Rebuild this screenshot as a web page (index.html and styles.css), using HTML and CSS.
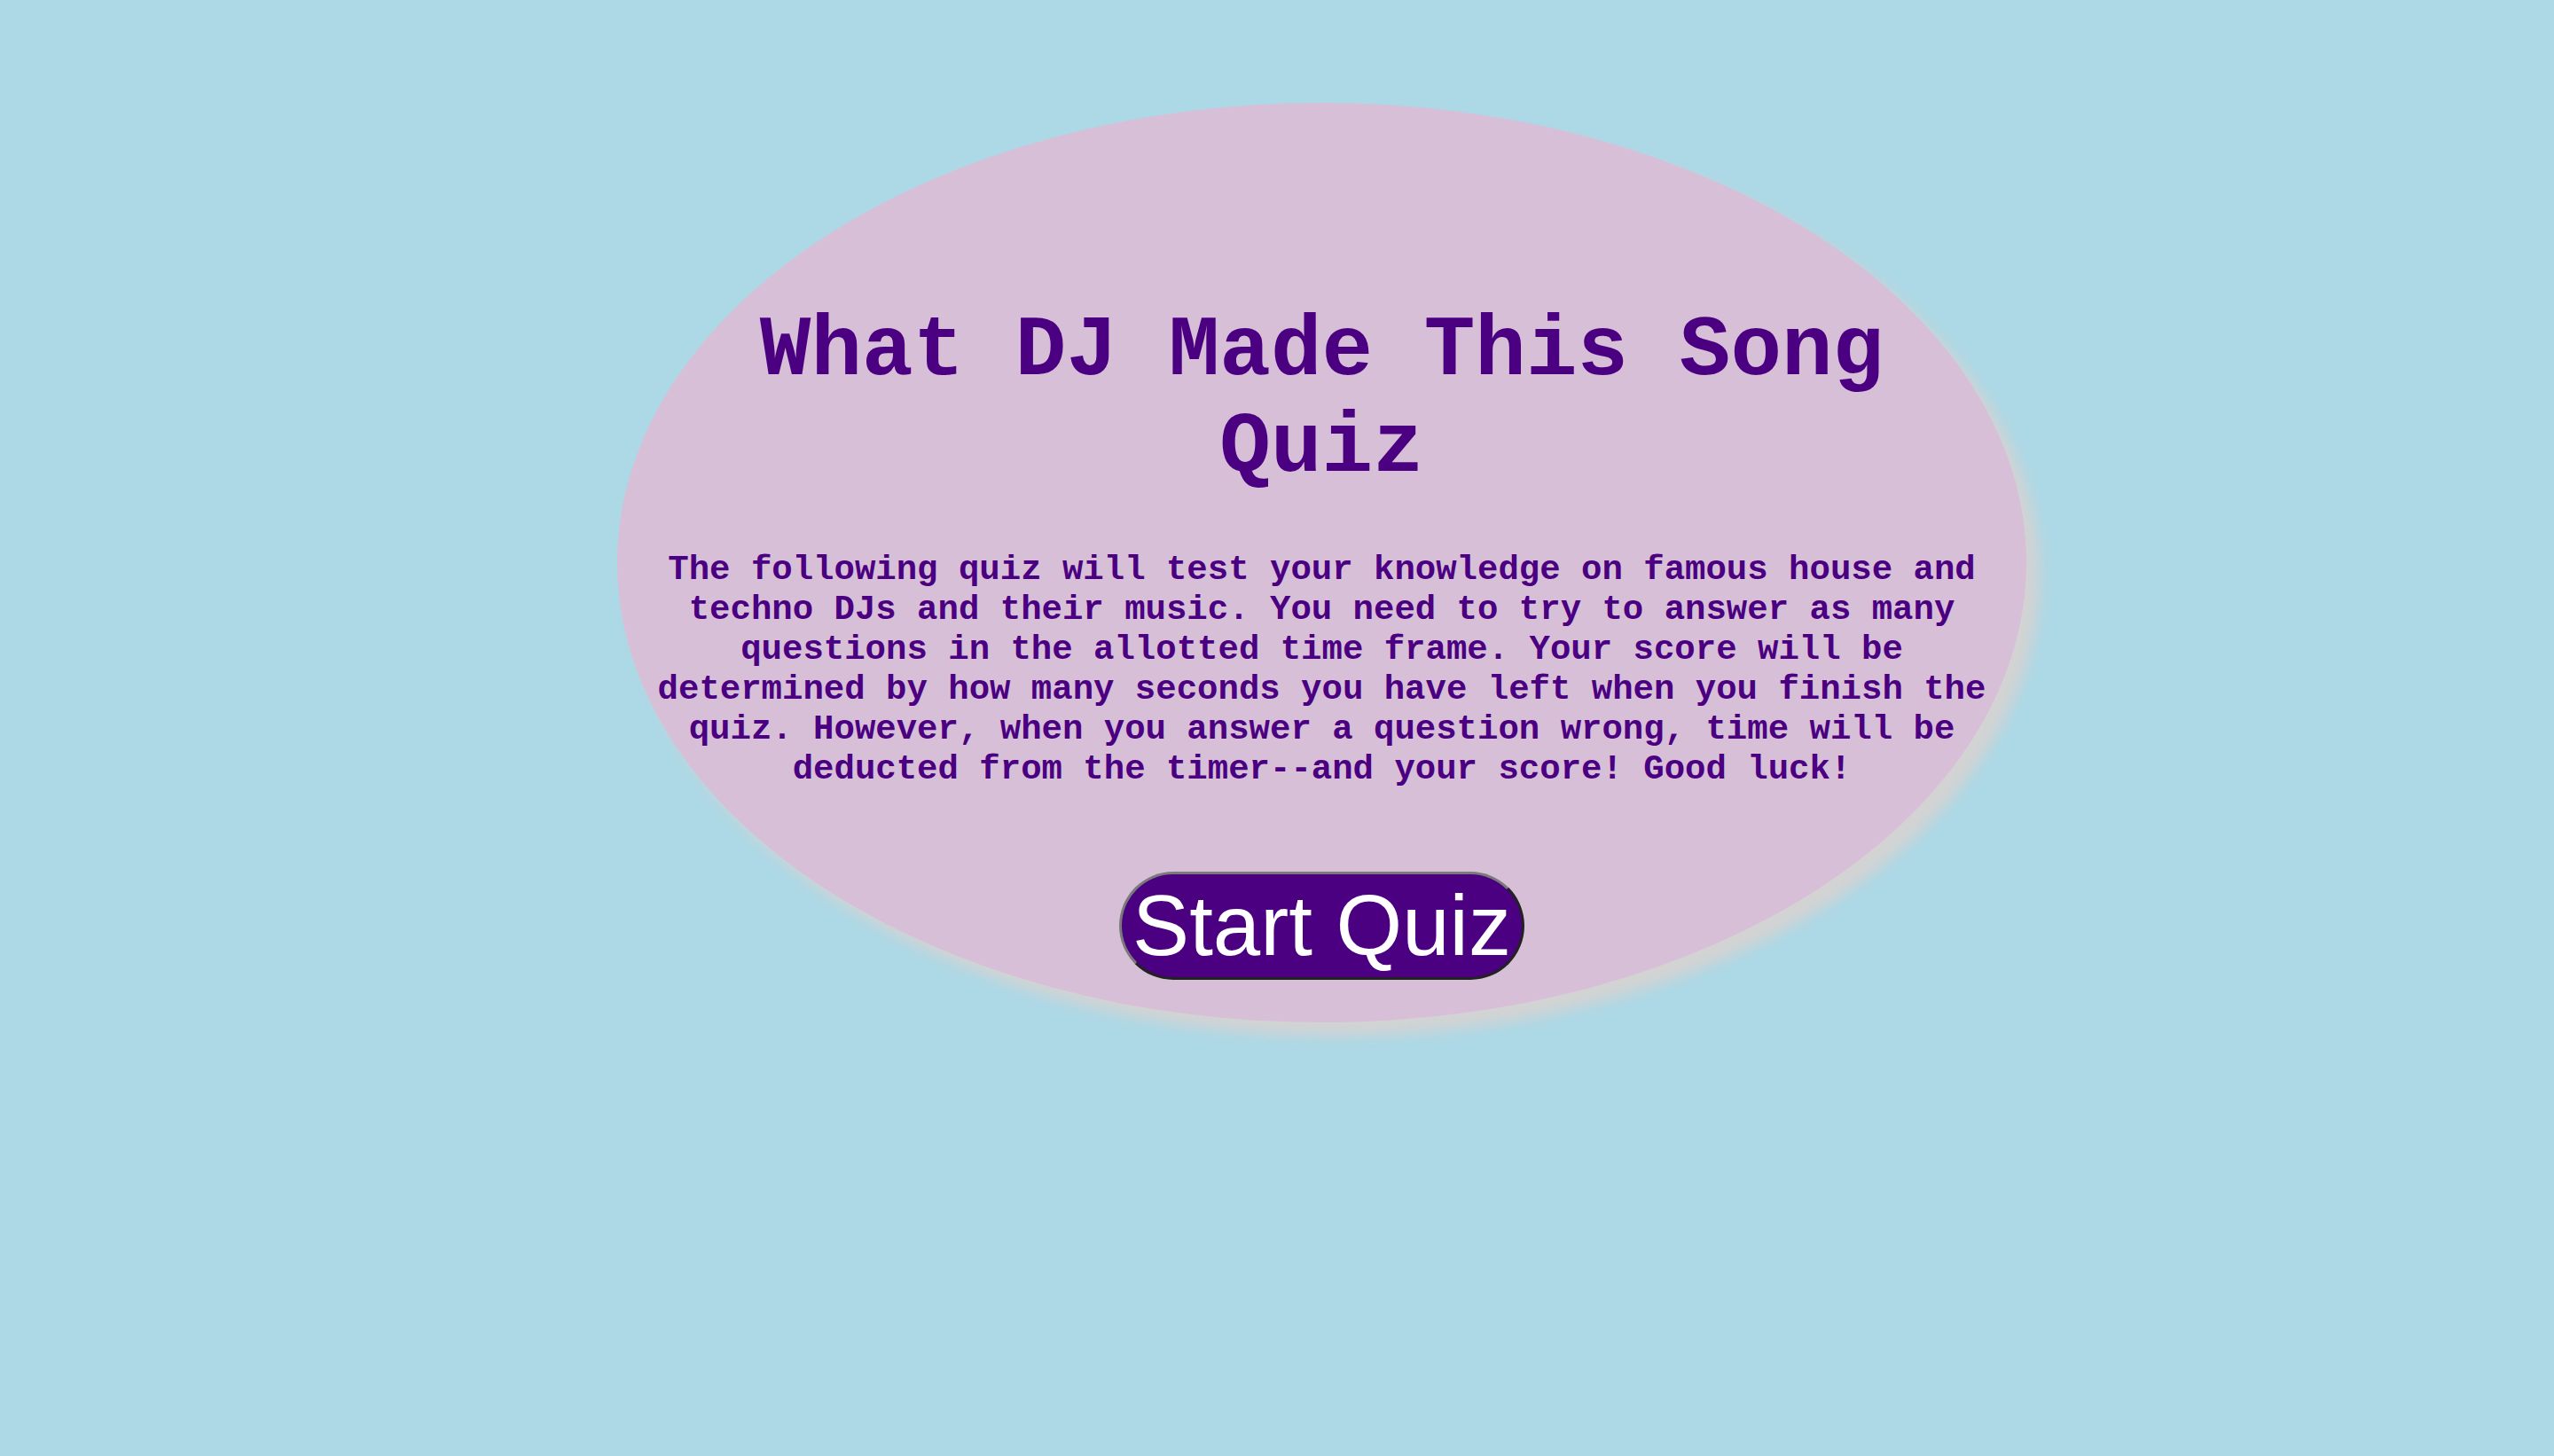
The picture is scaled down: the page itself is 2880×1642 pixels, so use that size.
FILE: index.html
```html
<!DOCTYPE html>
<html lang="en">
<head>
<meta charset="utf-8">
<title>What DJ Made This Song Quiz</title>
<link rel="stylesheet" href="styles.css">
</head>
<body>
<main class="quiz-card">
  <h1 class="quiz-title">What DJ Made This Song Quiz</h1>
  <p class="quiz-intro">The following quiz will test your knowledge on famous house and techno DJs and their music. You need to try to answer as many questions in the allotted time frame. Your score will be determined by how many seconds you have left when you finish the quiz. However, when you answer a question wrong, time will be deducted from the timer--and your score! Good luck!</p>
  <button class="start-btn" type="button">Start Quiz</button>
</main>
</body>
</html>
```
FILE: styles.css
```css
html, body {
  margin: 0;
  padding: 0;
}

body {
  background: #add8e6;
  min-height: 1642px;
  font-family: "Liberation Mono", "Courier New", monospace;
}

.quiz-card {
  box-sizing: border-box;
  width: 1589px;
  height: 1037px;
  margin: 116px 0 0 696px;
  padding: 226px 30px 0;
  background: #d8bfd8;
  border-radius: 50%;
  box-shadow: 15px 15px 15px #d3d3d3;
  display: flex;
  flex-direction: column;
  align-items: center;
  color: #4b0082;
  text-align: center;
}

.quiz-title {
  margin: 0;
  font-size: 96px;
  font-weight: bold;
  line-height: 109px;
}

.quiz-intro {
  margin: 61px 0 0;
  font-size: 39px;
  font-weight: bold;
  line-height: 45px;
}

.start-btn {
  margin-top: 92px;
  box-sizing: border-box;
  height: 122px;
  padding: 0 12px;
  background: #4b0082;
  color: #ffffff;
  font-family: "Liberation Sans", Arial, sans-serif;
  font-size: 96px;
  line-height: 110px;
  border: 3px solid;
  border-color: #7a7a7a #222222 #222222 #7a7a7a;
  border-radius: 61px;
  cursor: pointer;
}
```
